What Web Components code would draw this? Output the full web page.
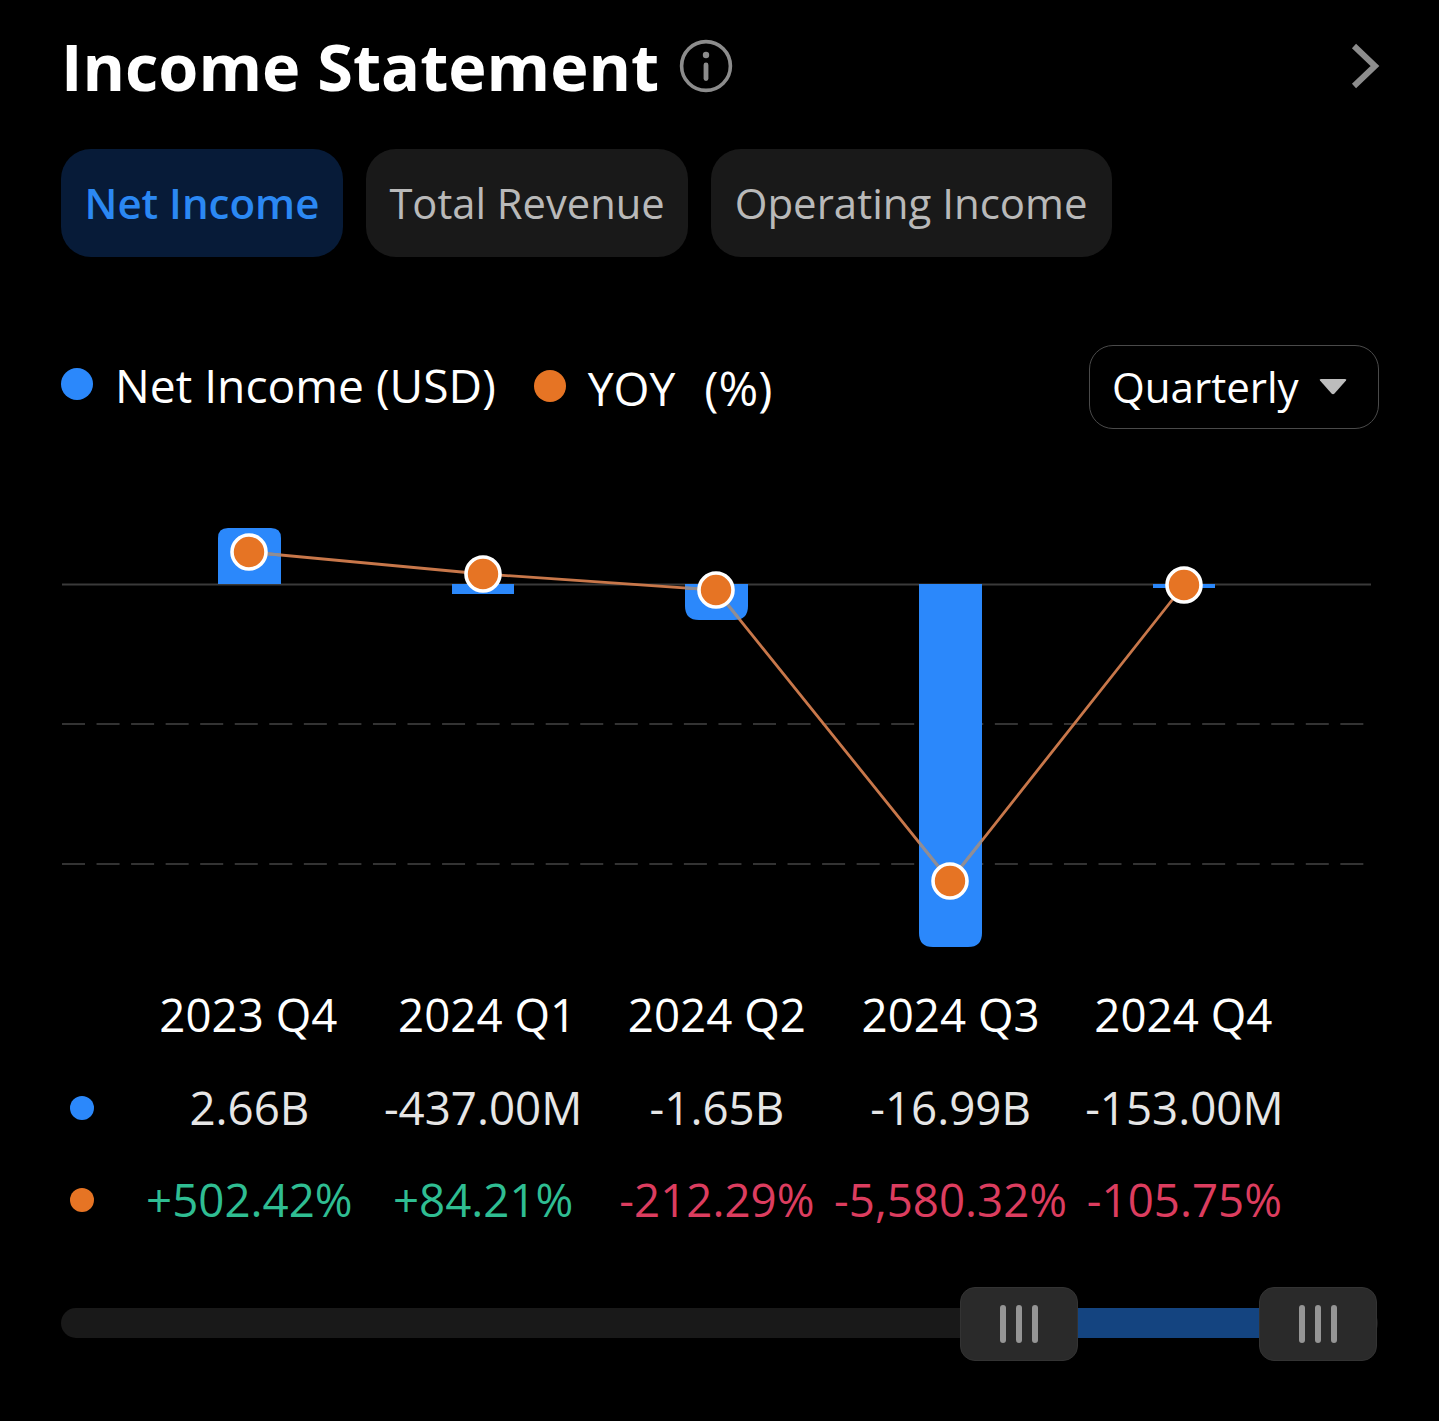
<!DOCTYPE html>
<html><head><meta charset="utf-8"><style>
html,body{margin:0;background:#000;}
body{width:1439px;height:1421px;overflow:hidden;font-family:"Open Sans",sans-serif;color:#fff}
</style></head><body>
<income-card></income-card>
<script>
class TitleBar extends HTMLElement{constructor(){super();this.attachShadow({mode:'open'}).innerHTML=`<style>
:host{display:flex;align-items:center;height:68px;padding:32px 59px 0 61px}
h1{margin:0;font:700 64.8px/68px "Open Sans",sans-serif;color:#fff;white-space:nowrap}
.i{margin-left:20px;display:block}.c{margin-left:auto;display:block}
</style><h1><slot></slot></h1>
<svg class="i" width="54" height="54" viewBox="0 0 54 54" fill="none"><circle cx="27" cy="27" r="24.4" stroke="#8c8c8c" stroke-width="3.6"/><circle cx="27" cy="16" r="3.2" fill="#8c8c8c"/><rect x="24.6" y="23.5" width="4.8" height="18.500" rx="2.4" fill="#8c8c8c"/></svg>
<svg class="c" width="30" height="46" viewBox="0 0 30 46" fill="none"><path d="M4 3 L25 23 L4 43" stroke="#8c8c8c" stroke-width="6"/></svg>`}}
customElements.define('title-bar',TitleBar);
class TabPill extends HTMLElement{constructor(){super();this.attachShadow({mode:'open'}).innerHTML=`<style>
:host{display:flex;align-items:center;height:108px;padding:0 24px;border-radius:30px;background:#191919;color:#b9b9b9;font:400 42px/1 "Open Sans",sans-serif;white-space:nowrap}
:host([active]){background:#071b38;color:#2b88f3;font-weight:600;padding:0 24px 0 23.500px}
</style><slot></slot>`}}
customElements.define('tab-pill',TabPill);
class TabRow extends HTMLElement{constructor(){super();this.attachShadow({mode:'open'}).innerHTML=`<style>
:host{display:flex;gap:23px;padding:49px 0 0 61px}</style><slot></slot>`}}
customElements.define('tab-row',TabRow);
class LegendBar extends HTMLElement{constructor(){super();this.attachShadow({mode:'open'}).innerHTML=`<style>
:host{display:flex;align-items:center;height:84px;margin-top:88px;padding:0 60px 0 61px;font:400 46.2px/1 "Open Sans",sans-serif;color:#fff;white-space:pre}
.d{width:32px;height:32px;border-radius:50%;flex:none}
.b{background:#2b88fb;margin:-6px 22px 0 0}.o{background:#e67424;margin:-2px 22px 0 38px}
.n{margin-bottom:2px}
.y{margin-top:2px}
.y b{font-weight:400;font-size:48px;margin-left:5px}
.s{margin-left:auto;width:288px;height:82px;border:1px solid #4a4a4a;border-radius:24px;display:flex;align-items:center;font-size:42.1px}
.s span{margin-left:22px}
.s svg{margin-left:20px}
</style><i class="d b"></i><span class="n">Net Income (USD)</span><i class="d o"></i><span class="y">YOY  <b>(%)</b></span>
<div class="s"><span>Quarterly</span><svg width="28" height="16" viewBox="0 0 28 16"><path d="M1 1.500 Q0 0 2 0 H26 Q28 0 27 1.500 L15.500 14.500 Q14 16 12.500 14.500Z" fill="#bdbdbd"/></svg></div>`}}
customElements.define('legend-bar',LegendBar);
class BarChart extends HTMLElement{constructor(){super();
const xs=[249,483,716,950,1184],ys=[552,574,590,881,585];
const dots=xs.map((x,i)=>`<circle cx="${x}" cy="${ys[i]-470}" r="17" fill="#e67424" stroke="#fff" stroke-width="3.6"/>`).join('');
const pts=xs.map((x,i)=>x+','+(ys[i]-470)).join(' ');
const bars=`<path d="M218 114 V68 Q218 58 228 58 H271 Q281 58 281 68 V114Z"/>
<rect x="452" y="114" width="62" height="10"/>
<path d="M685 114 H748 V136 Q748 150 734 150 H699 Q685 150 685 136Z"/>
<path d="M919 114 H982 V463 Q982 477 968 477 H933 Q919 477 919 463Z"/>
<rect x="1153" y="114" width="62" height="4"/>`;
this.attachShadow({mode:'open'}).innerHTML=`<style>:host{display:block;height:490px;margin-top:41px}svg{display:block}</style>
<svg width="1439" height="490" viewBox="0 0 1439 490" fill="none">
<defs><clipPath id="bc">${bars}</clipPath></defs>
<line x1="62" x2="1371" y1="114.500" y2="114.500" stroke="#3a3a3a" stroke-width="2"/>
<line x1="62" x2="1364" y1="254" y2="254" stroke="#333" stroke-width="2" stroke-dasharray="23 11.55"/>
<line x1="62" x2="1364" y1="394" y2="394" stroke="#333" stroke-width="2" stroke-dasharray="23 11.55"/>
<g fill="#2b88fb">${bars}</g>
<polyline points="${pts}" stroke="#c8774a" stroke-width="2.8"/>
<polyline points="${pts}" stroke="#8e8e96" stroke-width="3" clip-path="url(#bc)"/>
${dots}</svg>`}}
customElements.define('bar-chart',BarChart);
class DataTable extends HTMLElement{constructor(){super();
const rows=[['',['2023 Q4','2024 Q1','2024 Q2','2024 Q3','2024 Q4'],'#fff'],
['#2b88fb',['2.66B','-437.00M','-1.65B','-16.99B','-153.00M'],'#e6e6e6'],
['#e67424',['+502.42%','+84.21%','-212.29%','-5,580.32%','-105.75%'],'']];
const cols=['#2fbd92','#2fbd92','#dc3d5f','#dc3d5f','#dc3d5f'];
const adj=['r','q1','','','r'];
let h='';rows.forEach((r,ri)=>{h+=`<div class="l">${r[0]?`<i style="background:${r[0]}"></i>`:''}</div>`;
r[1].forEach((t,i)=>h+=`<div class="c ${ri==0?adj[i]:''}" style="color:${r[2]||cols[i]}">${t}</div>`)});
this.attachShadow({mode:'open'}).innerHTML=`<style>
:host{display:grid;grid-template-columns:132.5px repeat(5,233.75px);grid-auto-rows:92.5px;margin-top:9px;font:400 45.7px/1 "Open Sans",sans-serif}
.c{display:flex;align-items:center;justify-content:center;white-space:nowrap}
.q1{padding-left:8px}
.r{padding-right:2px}
.l{display:flex;align-items:center;padding-left:70px}
i{width:24px;height:24px;border-radius:50%;display:block}
</style>${h}`}}
customElements.define('data-table',DataTable);
class RangeSlider extends HTMLElement{constructor(){super();
const g=`<svg width="38" height="38" viewBox="0 0 38 38"><rect x="0" y="0" width="6" height="38" rx="3" fill="#959595"/><rect x="16" y="0" width="6" height="38" rx="3" fill="#959595"/><rect x="32" y="0" width="6" height="38" rx="3" fill="#959595"/></svg>`;
this.attachShadow({mode:'open'}).innerHTML=`<style>
:host{display:block;position:relative;height:74px;margin:40px 61px 0}
.t{position:absolute;left:0;right:0;top:21px;height:30px;border-radius:15px;background:#191919}
.f{position:absolute;left:1015px;width:185px;top:21px;height:30px;background:#144480}
.h{position:absolute;top:0;width:118px;height:74px;box-sizing:border-box;border:1px solid #333;border-radius:15px;background:#2a2a2a;display:flex;align-items:center;justify-content:center}
</style><div class="t"></div><div class="f"></div>
<div class="h" style="left:899px">${g}</div><div class="h" style="left:1198px">${g}</div>`}}
customElements.define('range-slider',RangeSlider);
class IncomeCard extends HTMLElement{constructor(){super();this.attachShadow({mode:'open'}).innerHTML=`<style>:host{display:block;width:1439px;height:1421px;background:#000;overflow:hidden}</style>
<title-bar>Income Statement</title-bar>
<tab-row><tab-pill active>Net Income</tab-pill><tab-pill style="font-size:41.7px;padding:0 23px">Total Revenue</tab-pill><tab-pill>Operating Income</tab-pill></tab-row>
<legend-bar></legend-bar><bar-chart></bar-chart><data-table></data-table><range-slider></range-slider>`}}
customElements.define('income-card',IncomeCard);
</script></body></html>
